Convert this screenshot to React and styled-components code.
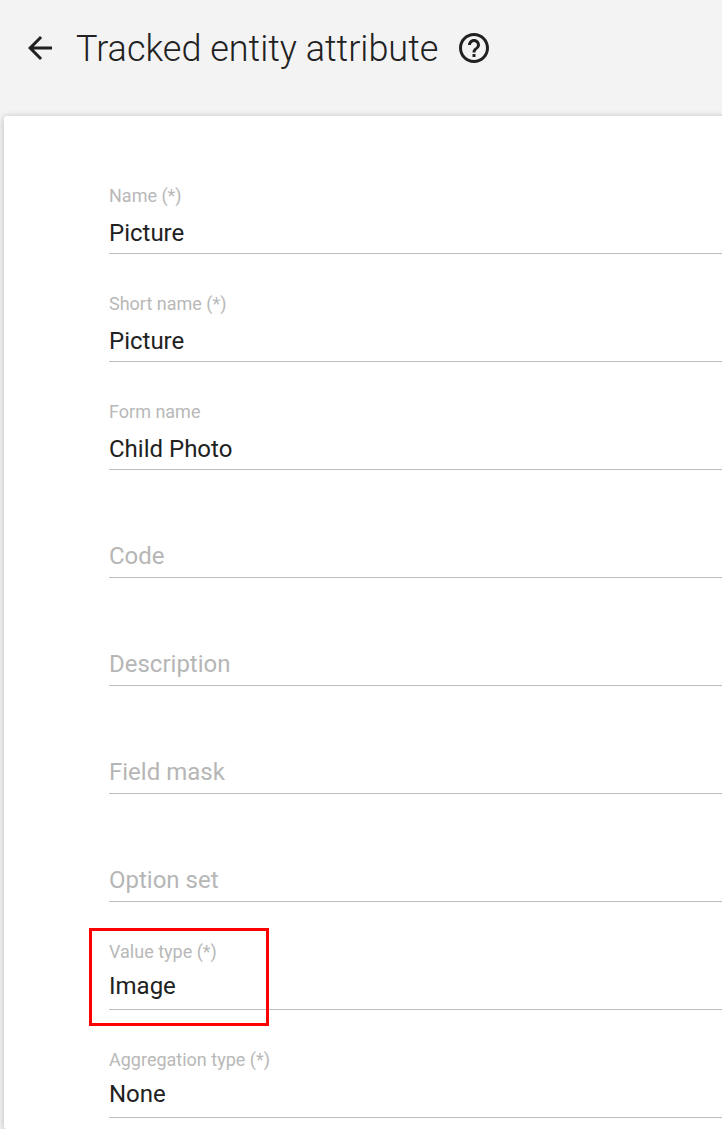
import React from "react";
import styled, { createGlobalStyle } from "styled-components";

const GlobalStyle = createGlobalStyle`
  * { box-sizing: border-box; }
  body { margin: 0; background: #f3f3f3; font-family: Roboto, sans-serif; }
`;
const Page = styled.div`
  height: 1129px;
  overflow: hidden;
  display: flex;
  flex-direction: column;
`;
const Header = styled.header`
  height: 116px;
  flex: none;
  display: flex;
  align-items: flex-start;
  padding: 24px 0 0 22px;
  color: #212121;
`;
const Icon = styled.svg`
  width: 36px;
  height: 36px;
  margin-top: 6px;
  fill: currentColor;
  display: block;
`;
const Title = styled.h1`
  margin: 1px 18px 0 18px;
  font-size: 36px;
  line-height: 48px;
  font-weight: 300;
  white-space: nowrap;
`;
const Card = styled.main`
  flex: 1;
  margin-left: 4px;
  margin-right: -10px;
  padding: 30px 0 0 105px;
  background: #fff;
  border-radius: 3px;
  box-shadow: 0 1px 9px rgba(0, 0, 0, 0.12), 0 1px 6px rgba(0, 0, 0, 0.12);
`;
const Field = styled.div`
  height: 108px;
  display: flex;
  flex-direction: column;
  border-bottom: 1px solid #bdbdbd;
  padding-top: 38px;
  white-space: nowrap;
`;
const Label = styled.div`
  font-size: 18px;
  line-height: 24px;
  color: #b8b8b8;
`;
const Value = styled.div`
  font-size: 24px;
  line-height: 32px;
  margin-top: ${(p) => (p.$select ? 6 : 9)}px;
  color: #212121;
`;
const Hint = styled.div`
  font-size: 24px;
  line-height: 32px;
  margin-top: 32px;
  color: #b6b6b6;
`;
const Highlight = styled.div`
  position: absolute;
  left: 89px;
  top: 928px;
  width: 180px;
  height: 98px;
  border: 3px solid #f00;
`;

const fields = [
  { label: "Name (*)", value: "Picture" },
  { label: "Short name (*)", value: "Picture" },
  { label: "Form name", value: "Child Photo" },
  { label: "Code" },
  { label: "Description" },
  { label: "Field mask" },
  { label: "Option set" },
  { label: "Value type (*)", value: "Image", select: true },
  { label: "Aggregation type (*)", value: "None", select: true },
];

export default function App() {
  return (
    <Page>
      <GlobalStyle />
      <Header>
        <Icon viewBox="0 0 24 24">
          <path d="M20 11H7.83l5.59-5.59L12 4l-8 8 8 8 1.41-1.41L7.83 13H20v-2z" />
        </Icon>
        <Title>Tracked entity attribute</Title>
        <Icon viewBox="0 0 24 24">
          <path d="M11 18h2v-2h-2v2zm1-16C6.48 2 2 6.48 2 12s4.48 10 10 10 10-4.48 10-10S17.52 2 12 2zm0 18c-4.41 0-8-3.59-8-8s3.59-8 8-8 8 3.59 8 8-3.59 8-8 8zm0-14c-2.21 0-4 1.79-4 4h2c0-1.1.9-2 2-2s2 .9 2 2c0 2-3 1.75-3 5h2c0-2.25 3-2.5 3-5 0-2.21-1.79-4-4-4z" />
        </Icon>
      </Header>
      <Card>
        {fields.map((f) => (
          <Field key={f.label}>
            {f.value ? (
              <>
                <Label>{f.label}</Label>
                <Value $select={f.select}>{f.value}</Value>
              </>
            ) : (
              <Hint>{f.label}</Hint>
            )}
          </Field>
        ))}
      </Card>
      <Highlight />
    </Page>
  );
}
